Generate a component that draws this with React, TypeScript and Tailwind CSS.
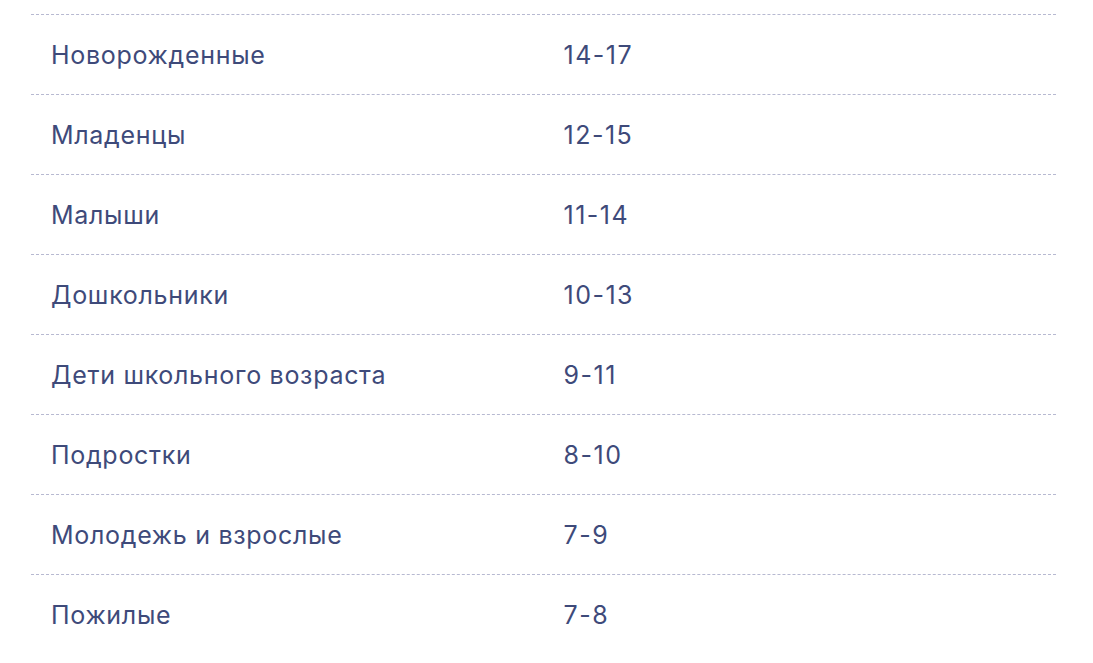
const rows = [
  ["Новорожденные", "14-17"],
  ["Младенцы", "12-15"],
  ["Малыши", "11-14"],
  ["Дошкольники", "10-13"],
  ["Дети школьного возраста", "9-11"],
  ["Подростки", "8-10"],
  ["Молодежь и взрослые", "7-9"],
  ["Пожилые", "7-8"],
];

export default function App() {
  return (
    <div className="min-h-screen bg-white pt-[14px] pl-[31px] font-['Inter',sans-serif] text-[25px] text-[#3e4a7a]">
      <div className="w-[1025px]">
        {rows.map(([group, hours]) => (
          <div key={group} className="grid h-[80px] grid-cols-2 items-center border-t border-dashed border-[#b7b9d1] pt-[2px]">
            <div className="pl-5 tracking-[0.7px]">{group}</div>
            <div className="pl-5 tracking-[1.5px]">{hours}</div>
          </div>
        ))}
      </div>
    </div>
  );
}
